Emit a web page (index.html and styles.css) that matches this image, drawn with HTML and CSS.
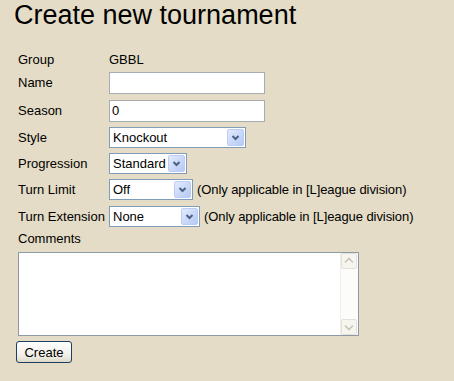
FILE: index.html
```html
<!DOCTYPE html>
<html lang="en">
<head>
    <meta charset="UTF-8">
    <meta name="viewport" content="width=device-width, initial-scale=1.0">
    <title>Create new tournament</title>
    <link rel="stylesheet" href="styles.css">
</head>
<body>
    <h1>Create new tournament</h1>
    <form class="tournament-form">
        <div class="field-grid">
            <span class="label">Group</span>
            <span class="value">GBBL</span>

            <label for="name">Name</label>
            <input type="text" id="name">

            <label for="season">Season</label>
            <input type="text" id="season" value="0">

            <label for="style">Style</label>
            <select id="style" class="sel-style">
                <option>Knockout</option>
            </select>

            <label for="progression">Progression</label>
            <select id="progression" class="sel-progression">
                <option>Standard</option>
            </select>

            <label for="turnlimit">Turn Limit</label>
            <div class="control-note">
                <select id="turnlimit" class="sel-turnlimit">
                    <option>Off</option>
                </select>
                <span class="note">(Only applicable in [L]eague division)</span>
            </div>

            <label for="turnext">Turn Extension</label>
            <div class="control-note">
                <select id="turnext" class="sel-turnext">
                    <option>None</option>
                </select>
                <span class="note">(Only applicable in [L]eague division)</span>
            </div>
        </div>

        <label for="comments" class="comments-label">Comments</label>
        <div class="comments-box">
            <textarea id="comments"></textarea>
            <div class="scrollbar">
                <span class="sb-btn">
                    <svg width="16" height="16" viewBox="0 0 16 16"><path d="M4 9.5l4-4 4 4" fill="none" stroke="#c9c6b8" stroke-width="1.6"/></svg>
                </span>
                <span class="sb-btn">
                    <svg width="16" height="16" viewBox="0 0 16 16"><path d="M4 6.5l4 4 4-4" fill="none" stroke="#c9c6b8" stroke-width="1.6"/></svg>
                </span>
            </div>
        </div>
        <button type="button" class="create-btn">Create</button>
    </form>
</body>
</html>
```

FILE: styles.css
```css
body {
    margin: 0;
    background: #e4dcc6;
    font-family: "Liberation Sans", Arial, sans-serif;
    font-size: 13px;
    color: #000;
}
h1 {
    font-weight: normal;
    font-size: 27px;
    line-height: 30px;
    margin: 0 0 0 14px;
}
.tournament-form {
    padding-left: 18px;
}
.field-grid {
    display: grid;
    grid-template-columns: 91px auto;
    grid-template-rows: 18px 29px 27px 27px 25px 27px 26px;
    align-items: center;
    justify-content: start;
    margin-top: 20px;
}
.field-grid input[type="text"] {
    width: 156px;
    height: 22px;
    box-sizing: border-box;
    border: 1px solid #a5acb2;
    padding: 0 2px;
    font: 13px "Liberation Sans", Arial, sans-serif;
    background: #fff;
}
.field-grid select {
    -webkit-appearance: none;
    appearance: none;
    height: 21px;
    box-sizing: border-box;
    border: 1px solid #7f9db9;
    border-radius: 0;
    padding: 0 18px 0 3px;
    font: 13px "Liberation Sans", Arial, sans-serif;
    color: #000;
    background: #fff url("data:image/svg+xml;utf8,<svg xmlns='http://www.w3.org/2000/svg' width='17' height='17'><defs><linearGradient id='g' x1='0' y1='0' x2='1' y2='1'><stop offset='0' stop-color='%23e3ecfe'/><stop offset='1' stop-color='%23b4c8f5'/></linearGradient></defs><rect x='0.5' y='0.5' width='16' height='16' rx='1.5' fill='url(%23g)' stroke='%23bccdf4'/><path d='M5.5 7l3 3 3-3' fill='none' stroke='%234d6185' stroke-width='2'/></svg>") no-repeat right 1px center;
}
.sel-style { width: 137px; }
.sel-progression { width: 78px; }
.sel-turnlimit { width: 84px; }
.sel-turnext { width: 91px; }
.control-note {
    display: flex;
    align-items: center;
    gap: 4px;
}
.note {
    letter-spacing: -0.08px;
}
.comments-label {
    display: block;
    line-height: 20px;
}
.comments-box {
    display: flex;
    width: 341px;
    height: 84px;
    box-sizing: border-box;
    margin-top: 3px;
    border: 1px solid #8d9aa6;
    background: #fff;
}
.comments-box textarea {
    flex: 1;
    border: 0;
    resize: none;
    outline: none;
    padding: 2px;
    font: 13px "Liberation Sans", Arial, sans-serif;
}
.scrollbar {
    width: 17px;
    display: flex;
    flex-direction: column;
    justify-content: space-between;
    background: #fcfcfa;
    border-left: 1px solid #f0efe8;
}
.sb-btn {
    display: block;
    width: 16px;
    height: 16px;
    box-sizing: border-box;
    border: 1px solid #e4e2d8;
    border-radius: 2px;
    background: #f6f5f0;
}
.sb-btn svg {
    display: block;
    margin: -1px;
}
.create-btn {
    display: block;
    width: 56px;
    height: 22px;
    margin: 5px 0 0 -2px;
    padding: 0;
    border: 1px solid #1c3f62;
    border-radius: 3px;
    background: linear-gradient(#ffffff, #f0eee6 70%, #dcd8c8);
    font: 13px "Liberation Sans", Arial, sans-serif;
    color: #000;
}
```
